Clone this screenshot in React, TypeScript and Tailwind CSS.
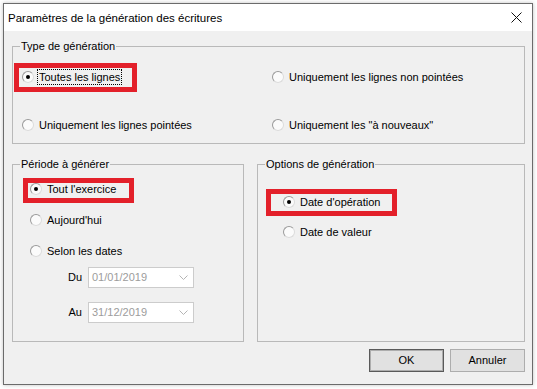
import type { ReactNode } from 'react';

function Radio({
  label,
  checked = false,
  focused = false,
  mark,
}: {
  label: string;
  checked?: boolean;
  focused?: boolean;
  mark?: string;
}) {
  return (
    <div className="relative flex h-[16px] items-center">
      {mark && <span className={`pointer-events-none absolute border-[5px] border-[#e3202a] ${mark}`} />}
      <span className="relative flex h-[12px] w-[12px] shrink-0 items-center justify-center rounded-full border border-[#9a9a9a] border-b-[#dcdcdc] border-r-[#dcdcdc] bg-[#fbfbfb]">
        {checked && <span className="h-[4px] w-[4px] rounded-full bg-black" />}
      </span>
      <span
        className={`ml-[4px] whitespace-nowrap px-[1px] leading-[14px] ${
          focused ? 'outline outline-1 outline-dotted outline-black' : ''
        }`}
      >
        {label}
      </span>
    </div>
  );
}

function GroupBox({ title, className, children }: { title: string; className: string; children: ReactNode }) {
  return (
    <div className={`relative border border-[#b9b9b9] ${className}`}>
      <span className="absolute -top-[8px] left-[7px] bg-[#f0f0f0] px-[1px] leading-[14px]">{title}</span>
      {children}
    </div>
  );
}

function DateCombo({ label, value }: { label: string; value: string }) {
  return (
    <div className="flex items-center">
      <span className="w-[69px] text-right">{label}</span>
      <div className="ml-[6px] flex h-[21px] w-[106px] items-center justify-between border border-[#cccccc] bg-white pl-[3px] pr-[5px] text-[#9c9c9c]">
        <span>{value}</span>
        <svg width="9" height="5" viewBox="0 0 9 5" fill="none">
          <path d="M0.5 0.5 L4.5 4.5 L8.5 0.5" stroke="#b4b4b4" strokeWidth="1" />
        </svg>
      </div>
    </div>
  );
}

export default function App() {
  return (
    <div className="h-[389px] w-[537px] overflow-hidden bg-white pl-[3px] pt-[3px] font-['Liberation_Sans',Arial,sans-serif] text-[11px] text-black">
      <div className="flex h-[382px] w-[530px] flex-col border border-[#6b6b6b] bg-[#f0f0f0] shadow-[0_0_4px_rgba(0,0,0,0.25)]">
        <div className="flex h-[27px] shrink-0 items-center justify-between bg-white pl-[4px] pr-[10px]">
          <span className="text-[11.5px] leading-[16px]">Paramètres de la génération des écritures</span>
          <svg width="11" height="11" viewBox="0 0 11 11">
            <path d="M0.5 0.5 L10.5 10.5 M10.5 0.5 L0.5 10.5" stroke="#111" strokeWidth="1" />
          </svg>
        </div>

        <div className="flex flex-1 flex-col pl-[8px] pt-[15px]">
          <GroupBox title="Type de génération" className="h-[98px] w-[513px]">
            <div className="grid grid-cols-[250px_1fr] gap-y-[32px] pl-[9px] pt-[22px]">
              <Radio label="Toutes les lignes" checked focused mark="-left-[8px] -top-[6px] h-[29px] w-[123px]" />
              <Radio label="Uniquement les lignes non pointées" />
              <Radio label="Uniquement les lignes pointées" />
              <Radio label={'Uniquement les "à nouveaux"'} />
            </div>
          </GroupBox>

          <div className="mt-[20px] flex gap-[13px]">
            <GroupBox title="Période à générer" className="h-[178px] w-[232px]">
              <div className="flex flex-col gap-[15px] pl-[17px] pt-[16px]">
                <Radio label="Tout l'exercice" checked mark="-left-[7px] -top-[3px] h-[25px] w-[111px]" />
                <Radio label="Aujourd'hui" />
                <Radio label="Selon les dates" />
              </div>
              <div className="mt-[8px] flex flex-col gap-[14px]">
                <DateCombo label="Du" value="01/01/2019" />
                <DateCombo label="Au" value="31/12/2019" />
              </div>
            </GroupBox>

            <GroupBox title="Options de génération" className="h-[178px] w-[268px]">
              <div className="flex flex-col gap-[14px] pl-[25px] pt-[29px]">
                <Radio label="Date d'opération" checked mark="-left-[17px] -top-[5px] h-[27px] w-[131px]" />
                <Radio label="Date de valeur" />
              </div>
            </GroupBox>
          </div>

          <div className="mt-[7px] flex w-[513px] justify-end gap-[6px]">
            <button className="h-[23px] w-[75px] border border-[#5a5a5a] bg-[#e1e1e1] shadow-[inset_0_0_0_1px_#adadad]">OK</button>
            <button className="h-[23px] w-[75px] border border-[#adadad] bg-[#e1e1e1]">Annuler</button>
          </div>
        </div>
      </div>
    </div>
  );
}
